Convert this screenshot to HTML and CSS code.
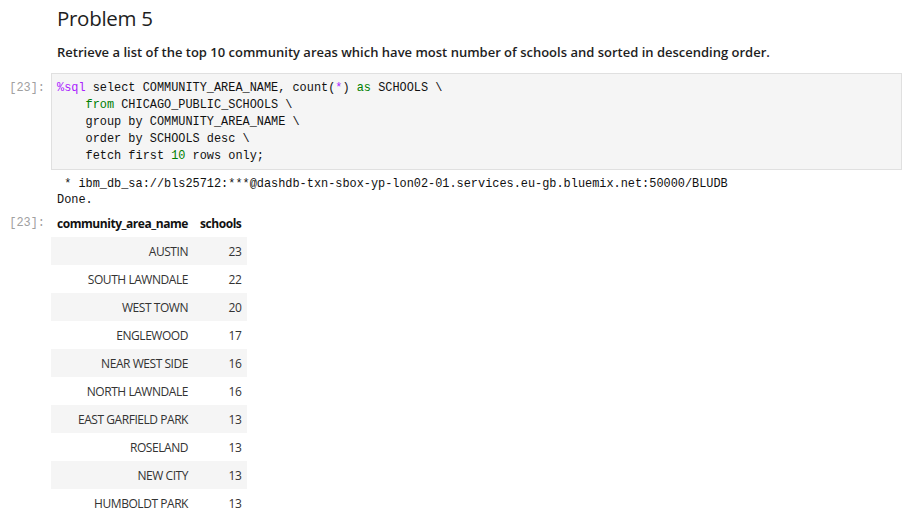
FILE: index.html
```html
<!DOCTYPE html>
<html>
<head>
<meta charset="utf-8">
<link rel="stylesheet" href="styles.css">
</head>
<body>
<div class="cell md">
  <div class="prompt"></div>
  <div class="md-body">
    <h2 class="title">Problem 5</h2>
    <p class="desc">Retrieve a list of the top 10 community areas which have most number of schools and sorted in descending order.</p>
  </div>
</div>
<div class="cell code">
  <div class="prompt">[23]:</div>
  <div class="editor"><pre><span class="mg">%sql</span> select COMMUNITY_AREA_NAME, count(<span class="op">*</span>) <span class="kw">as</span> SCHOOLS \
    <span class="kw">from</span> CHICAGO_PUBLIC_SCHOOLS \
    group by COMMUNITY_AREA_NAME \
    order by SCHOOLS desc \
    fetch first <span class="num">10</span> rows only;</pre></div>
</div>
<div class="cell out">
  <div class="prompt"></div>
  <pre class="stream"> * ibm_db_sa://bls25712:***@dashdb-txn-sbox-yp-lon02-01.services.eu-gb.bluemix.net:50000/BLUDB
Done.</pre>
</div>
<div class="cell result">
  <div class="prompt">[23]:</div>
  <table class="df">
    <thead><tr><th>community_area_name</th><th>schools</th></tr></thead>
    <tbody>
      <tr><td>AUSTIN</td><td>23</td></tr>
      <tr><td>SOUTH LAWNDALE</td><td>22</td></tr>
      <tr><td>WEST TOWN</td><td>20</td></tr>
      <tr><td>ENGLEWOOD</td><td>17</td></tr>
      <tr><td>NEAR WEST SIDE</td><td>16</td></tr>
      <tr><td>NORTH LAWNDALE</td><td>16</td></tr>
      <tr><td>EAST GARFIELD PARK</td><td>13</td></tr>
      <tr><td>ROSELAND</td><td>13</td></tr>
      <tr><td>NEW CITY</td><td>13</td></tr>
      <tr><td>HUMBOLDT PARK</td><td>13</td></tr>
    </tbody>
  </table>
</div>
</body>
</html>
```

FILE: styles.css
```css
html, body {
  margin: 0;
  padding: 0;
  background: #ffffff;
  overflow: hidden;
}
body {
  font-family: "Open Sans", "Noto Sans", sans-serif;
  color: #222;
}
.cell {
  display: flex;
  align-items: flex-start;
}
.prompt {
  width: 45px;
  flex: none;
  padding-right: 6px;
  text-align: right;
  font-family: "Liberation Mono", monospace;
  font-size: 11.9px;
  line-height: 17px;
  color: #a0a0a0;
}
.md-body {
  padding-left: 6px;
  flex: 1;
}
.title {
  margin: 0;
  padding-top: 5px;
  font-size: 20.5px;
  font-weight: 400;
  line-height: 26px;
  color: #1e1e1e;
  letter-spacing: -0.3px;
}
.desc {
  margin: 12px 0 0 0;
  font-size: 13px;
  font-weight: 600;
  line-height: 18px;
  color: #1e1e1e;
}
.code {
  margin-top: 12px;
}
.code .prompt {
  padding-top: 7px;
}
.editor {
  flex: 1;
  background: #f5f5f5;
  border: 1px solid #e0e0e0;
  padding: 6px 5px 4px 5px;
}
pre {
  margin: 0;
  font-family: "Liberation Mono", monospace;
  font-size: 11.9px;
  line-height: 17px;
  color: #111;
}
.mg { color: #aa22ff; }
.op { color: #aa22ff; }
.kw { color: #008000; }
.num { color: #008000; }
.out {
  margin-top: 6px;
}
.stream {
  padding-left: 6px;
  line-height: 16px;
}
.result {
  margin-top: 1px;
}
.result .prompt {
  padding-top: 6px;
}
.df {
  border-collapse: collapse;
  border-spacing: 0;
  font-size: 12px;
  letter-spacing: -0.45px;
  color: #333;
}
.df th, .df td {
  padding: 0 6px;
  text-align: right;
  white-space: nowrap;
}
.df th {
  height: 28px;
  font-weight: 700;
  color: #111;
}
.df td {
  height: 28px;
}
.df tbody tr:nth-child(odd) {
  background: #f5f5f5;
}
```
